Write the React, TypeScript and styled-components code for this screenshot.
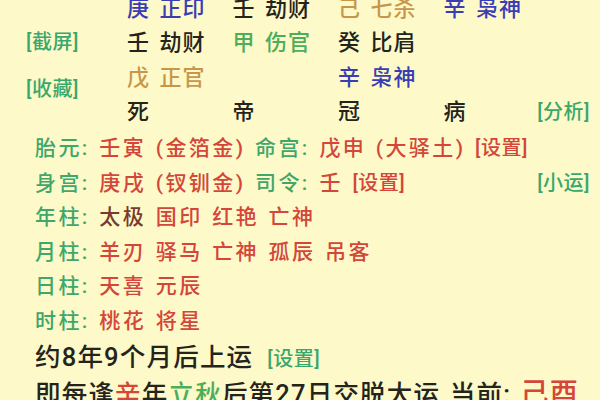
import React from "react";
import styled, { createGlobalStyle } from "styled-components";

const GlobalStyle = createGlobalStyle`
  html, body {
    margin: 0;
    padding: 0;
    background: #fdf9c9;
  }
  body {
    font-family: "Roboto", "Noto Sans CJK SC", sans-serif;
    font-weight: 500;
    overflow: hidden;
  }
`;

const C = {
  blue: "#3a3db4",
  dark: "#24241c",
  tan: "#c8964a",
  green: "#4cad5a",
  label: "#40a76a",
  link: "#38a86c",
  red: "#d4453a",
  brown: "#7a3a2e",
};

const Page = styled.div`
  width: 600px;
  height: 400px;
  overflow: hidden;
  background: #fdf9c9;
  display: flex;
  flex-direction: column;
`;

const Top = styled.div`
  display: flex;
  margin-top: -8px;
`;

const SideCol = styled.div`
  flex: 0 0 auto;
  width: 101px;
  padding-left: 26px;
  padding-top: 34px;
  display: flex;
  flex-direction: column;
`;

const SideItem = styled.div`
  height: 47px;
  display: flex;
  align-items: flex-start;
`;

const Link = styled.span<{ $c?: string; $gap?: number }>`
  font-size: 20px;
  letter-spacing: 0.5px;
  color: ${(p) => p.$c || C.link};
  white-space: nowrap;
  ${(p) => (p.$gap ? `margin-left: ${p.$gap}px;` : "")}
`;

const Grid = styled.div`
  flex: 0 0 auto;
  display: grid;
  grid-template-columns: repeat(3, 105.5px) 90px;
  grid-auto-rows: 34.3px;
`;

const Cell = styled.div<{ $c: string }>`
  font-size: 22px;
  letter-spacing: 1px;
  word-spacing: 3px;
  color: ${(p) => p.$c};
  line-height: 34.3px;
  white-space: nowrap;
`;

const RightCol = styled.div`
  flex: 1;
  min-width: 0;
  display: flex;
  flex-direction: column;
  justify-content: flex-end;
  align-items: flex-end;
  padding-right: 10px;
`;

const RightItem = styled.div`
  height: 34.3px;
  line-height: 34.3px;
`;

const Lines = styled.div`
  display: flex;
  flex-direction: column;
  padding-left: 35px;
  padding-right: 10px;
  margin-top: 2px;
`;

const Line = styled.div<{ $big?: boolean }>`
  height: ${(p) => (p.$big ? 36 : 34.5)}px;
  line-height: ${(p) => (p.$big ? 36 : 34.5)}px;
  display: flex;
  align-items: center;
  justify-content: space-between;
  white-space: nowrap;
`;

const Spacer = styled.div`
  height: 2px;
`;

const Text = styled.span<{ $big?: boolean }>`
  font-size: ${(p) => (p.$big ? 25.5 : 21)}px;
  letter-spacing: ${(p) => (p.$big ? 1.2 : 2.4)}px;
  word-spacing: ${(p) => (p.$big ? 2 : 2)}px;
  color: ${C.dark};
`;

const Part = styled.span<{ $c: string; $size?: number }>`
  color: ${(p) => p.$c};
  ${(p) => (p.$size ? `font-size: ${p.$size}px;` : "")}
`;

type Seg = [string, string];
const grid: (Seg | null)[][] = [
  [["庚 正印", C.blue], ["壬 劫财", C.dark], ["己 七杀", C.tan], ["辛 枭神", C.blue]],
  [["壬 劫财", C.dark], ["甲 伤官", C.green], ["癸 比肩", C.dark], null],
  [["戊 正官", C.tan], null, ["辛 枭神", C.blue], null],
  [["死", C.dark], ["帝", C.dark], ["冠", C.dark], ["病", C.dark]],
];

const shensha: { label: string; parts: Seg[] }[] = [
  { label: "年柱: ", parts: [["太极 ", C.brown], ["国印 红艳 亡神", C.red]] },
  { label: "月柱: ", parts: [["羊刃 驿马 亡神 孤辰 吊客", C.red]] },
  { label: "日柱: ", parts: [["天喜 元辰", C.red]] },
  { label: "时柱: ", parts: [["桃花 将星", C.red]] },
];

export default function App() {
  return (
    <Page>
      <GlobalStyle />
      <Top>
        <SideCol>
          <SideItem>
            <Link>[截屏]</Link>
          </SideItem>
          <SideItem>
            <Link>[收藏]</Link>
          </SideItem>
        </SideCol>
        <Grid>
          {grid.flatMap((row, r) =>
            row.map((cell, i) => (
              <Cell key={`${r}-${i}`} $c={cell ? cell[1] : C.dark}>
                {cell ? cell[0] : ""}
              </Cell>
            ))
          )}
        </Grid>
        <RightCol>
          <RightItem>
            <Link>[分析]</Link>
          </RightItem>
        </RightCol>
      </Top>
      <Lines>
        <Line>
          <Text>
            <Part $c={C.label}>胎元: </Part>
            <Part $c={C.red}>壬寅 (金箔金) </Part>
            <Part $c={C.label}>命宫: </Part>
            <Part $c={C.red}>戊申 (大驿土) </Part>
            <Link $c={C.red}>[设置]</Link>
          </Text>
        </Line>
        <Line>
          <Text>
            <Part $c={C.label}>身宫: </Part>
            <Part $c={C.red}>庚戌 (钗钏金) </Part>
            <Part $c={C.label}>司令: </Part>
            <Part $c={C.red}>壬 </Part>
            <Link $c={C.red}>[设置]</Link>
          </Text>
          <Link>[小运]</Link>
        </Line>
        {shensha.map((s) => (
          <Line key={s.label}>
            <Text>
              <Part $c={C.label}>{s.label}</Part>
              {s.parts.map(([t, c]) => (
                <Part key={t} $c={c}>
                  {t}
                </Part>
              ))}
            </Text>
          </Line>
        ))}
        <Spacer />
        <Line $big>
          <Text $big>
            约8年9个月后上运<Link $gap={14}>[设置]</Link>
          </Text>
        </Line>
        <Line $big>
          <Text $big>
            即每逢<Part $c={C.red}>辛</Part>年<Part $c={C.green}>立秋</Part>
            后第27日交脱大运 当前: <Part $c={C.red} $size={28}>己酉</Part>
          </Text>
        </Line>
      </Lines>
    </Page>
  );
}
